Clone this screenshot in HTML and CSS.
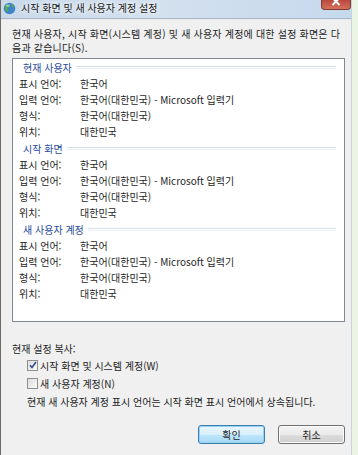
FILE: index.html
```html
<!DOCTYPE html>
<html lang="ko">
<head>
  <meta charset="UTF-8" />
  <title>시작 화면 및 새 사용자 계정 설정</title>
  <link rel="stylesheet" href="styles.css">
</head>
<body>
  <div class="window">
    <div class="titlebar">
      <svg class="app-icon" width="13" height="13" viewBox="0 0 13 13">
        <circle cx="6.5" cy="6.5" r="5.8" fill="#3b86c9"/>
        <path d="M3 3.2c1.2-.8 2.6-.6 3.2.4.5.9-.3 1.6-1.2 1.9-.9.3-.8 1.4-.2 2 .6.7.2 1.9-.8 2.1C2.9 9 2.2 7.8 2.1 6.4 2 5.2 2.3 4 3 3.2z" fill="#5cae3e"/>
        <path d="M8.2 2c1.5.5 2.7 1.8 2.9 3.4-.7.2-1.4-.2-1.7-.9-.3-.8-1.2-1-1.5-1.8-.1-.3 0-.6.3-.7z" fill="#5cae3e"/>
        <ellipse cx="4.8" cy="3.6" rx="2" ry="1.2" fill="#fff" opacity=".45"/>
      </svg>
      <span class="title">시작 화면 및 새 사용자 계정 설정</span>
      <div class="close-btn">
        <svg width="28" height="9" viewBox="0 0 28 9"><path d="M10.5 -2L17.5 5M17.5 -2L10.5 5" stroke="#fff" stroke-width="2"/></svg>
      </div>
    </div>

    <div class="client">
      <p class="intro">현재 사용자, 시작 화면(시스템 계정) 및 새 사용자 계정에 대한 설정 화면은 다<br>음과 같습니다(S).</p>

      <div class="settings-box">
        <div class="group">
          <div class="group-header"><span>현재 사용자</span></div>
          <div class="row"><span class="label">표시 언어:</span><span>한국어</span></div>
          <div class="row"><span class="label">입력 언어:</span><span>한국어(대한민국) - Microsoft 입력기</span></div>
          <div class="row"><span class="label">형식:</span><span>한국어(대한민국)</span></div>
          <div class="row"><span class="label">위치:</span><span>대한민국</span></div>
        </div>
        <div class="group">
          <div class="group-header"><span>시작 화면</span></div>
          <div class="row"><span class="label">표시 언어:</span><span>한국어</span></div>
          <div class="row"><span class="label">입력 언어:</span><span>한국어(대한민국) - Microsoft 입력기</span></div>
          <div class="row"><span class="label">형식:</span><span>한국어(대한민국)</span></div>
          <div class="row"><span class="label">위치:</span><span>대한민국</span></div>
        </div>
        <div class="group">
          <div class="group-header"><span>새 사용자 계정</span></div>
          <div class="row"><span class="label">표시 언어:</span><span>한국어</span></div>
          <div class="row"><span class="label">입력 언어:</span><span>한국어(대한민국) - Microsoft 입력기</span></div>
          <div class="row"><span class="label">형식:</span><span>한국어(대한민국)</span></div>
          <div class="row"><span class="label">위치:</span><span>대한민국</span></div>
        </div>
      </div>

      <div class="copy-section">
        <div class="copy-title">현재 설정 복사:</div>
        <label class="check-row">
          <span class="checkbox checked">
            <svg width="8" height="8" viewBox="0 0 8 8"><path d="M1 4.2l2 2.3L7 1" fill="none" stroke="#2a4c8c" stroke-width="1.5"/></svg>
          </span>
          시작 화면 및 시스템 계정(W)
        </label>
        <label class="check-row">
          <span class="checkbox"></span>
          새 사용자 계정(N)
        </label>
        <div class="note">현재 새 사용자 계정 표시 언어는 시작 화면 표시 언어에서 상속됩니다.</div>
      </div>

      <div class="buttons">
        <button class="btn btn-default">확인</button>
        <button class="btn">취소</button>
      </div>
    </div>
  </div>
</body>
</html>
```

FILE: styles.css
```css
html, body {
  margin: 0;
  padding: 0;
}
body {
  width: 358px;
  height: 455px;
  overflow: hidden;
  background: #eaf5e5;
  font-family: "Noto Sans CJK KR", "Noto Sans", sans-serif;
  font-size: 10px;
  color: #1e1e1e;
}
.window {
  width: 350px;
  height: 455px;
  border-left: 1px solid #6f6a66;
  border-right: 1px solid #c9d3dc;
  display: flex;
  flex-direction: column;
  background: #f0f0f0;
}
.titlebar {
  height: 18px;
  flex: none;
  display: flex;
  align-items: center;
  padding-left: 2px;
  background: linear-gradient(90deg, #c9d9ea 0%, #d3e0ee 45%, #c6d9ed 100%);
  border-bottom: 1px solid #a9b8c8;
  position: relative;
}
.app-icon {
  margin-right: 5px;
  margin-top: -2px;
}
.title {
  color: #1a1a1a;
  font-size: 10px;
  line-height: 16px;
  margin-top: -2px;
  text-shadow: 0 0 6px #fff, 0 0 4px #fff;
}
.close-btn {
  position: absolute;
  right: 0;
  top: 0;
  width: 28px;
  height: 9px;
  background: linear-gradient(#b9483a, #d6705c);
  border: 1px solid #7f3a2f;
  border-top: none;
  border-radius: 0 0 4px 4px;
  overflow: hidden;
}
.close-btn svg {
  display: block;
}
.client {
  flex: 1;
  padding: 7px 6px 0 11px;
  border-top: 1px solid #e9ecef;
}
.intro {
  margin: 0 0 3px 0;
  line-height: 14px;
  white-space: nowrap;
  letter-spacing: 0.2px;
}
.settings-box {
  width: 333px;
  box-sizing: border-box;
  background: #fff;
  border: 1px solid #828790;
  padding-bottom: 19px;
}
.group-header {
  height: 17px;
  display: flex;
  align-items: center;
  padding-left: 10px;
  padding-right: 8px;
  color: #274a9c;
}
.group-header::after {
  content: "";
  flex: 1;
  height: 1px;
  margin-left: 4px;
  border-top: 1px solid #d5deec;
  border-bottom: 1px solid #e9eef6;
}
.row {
  height: 16px;
  line-height: 16px;
  padding-left: 6px;
  display: flex;
}
.label {
  width: 61px;
  flex: none;
}
.copy-section {
  margin-top: 20px;
}
.copy-title {
  line-height: 14px;
}
.check-row {
  display: flex;
  align-items: center;
  height: 18px;
  padding-left: 15px;
}
.checkbox {
  width: 9px;
  height: 9px;
  border: 1px solid #8e8f8f;
  background: linear-gradient(135deg, #dcdcdc, #fafafa);
  margin-right: 2px;
  display: flex;
  align-items: center;
  justify-content: center;
}
.note {
  margin-top: 3px;
  padding-left: 15px;
  line-height: 14px;
}
.buttons {
  display: flex;
  justify-content: flex-end;
  gap: 13px;
  width: 333px;
  margin-top: 16px;
}
.btn {
  width: 67px;
  height: 19px;
  padding: 0;
  font-family: inherit;
  font-size: 10px;
  color: #1e1e1e;
  border: 1px solid #707070;
  border-radius: 3px;
  background: linear-gradient(#f2f2f2 0%, #ebebeb 50%, #dddddd 51%, #cfcfcf 100%);
  box-shadow: inset 0 0 0 1px #fbfbfb;
}
.btn-default {
  border-color: #3c7fb1;
  background: linear-gradient(#eaf6fd 0%, #d9f0fc 50%, #bee6fd 51%, #a7d9f5 100%);
  box-shadow: inset 0 0 0 1px #98d1ef;
}
```
